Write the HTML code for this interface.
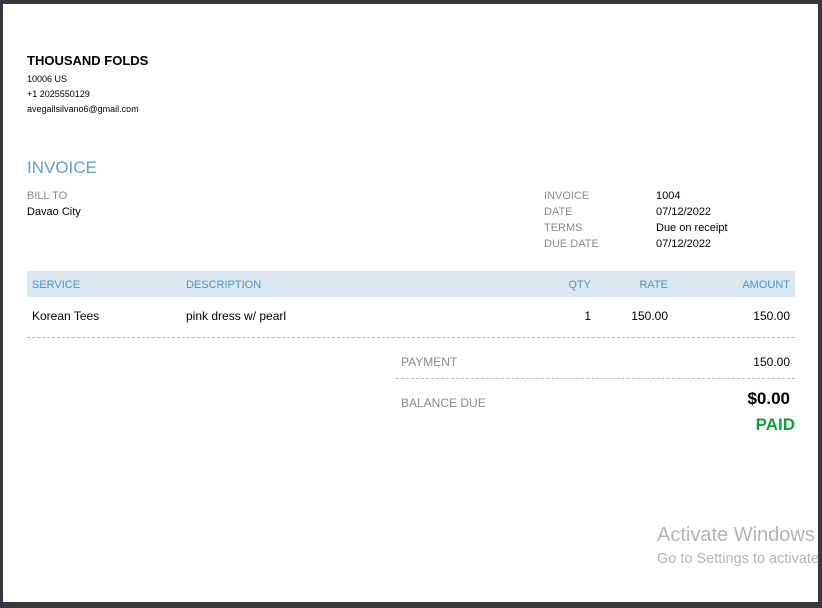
<!DOCTYPE html>
<html><head><style>
body{margin:0;width:822px;height:607px;background:#38373d;position:relative;overflow:hidden;font-family:"Liberation Sans",Arial,sans-serif;}
.page{position:absolute;left:3px;top:4px;width:815px;height:598px;background:#fff;}
.w{position:absolute;left:0;top:1px;width:822px;height:607px;}
.a{position:absolute;white-space:nowrap;}
.g{color:#8a8a8e;font-size:11px;}
.k{color:#000;font-size:11px;}
.b{color:#5391be;font-size:11px;}
</style></head><body>
<div class="page"></div>
<div class="w">
<div class="a" style="left:27px;top:52px;font-size:13px;font-weight:bold;">THOUSAND FOLDS</div>
<div class="a" style="left:27px;top:73px;font-size:9px;">10006 US</div>
<div class="a" style="left:27px;top:88px;font-size:9px;">+1 2025550129</div>
<div class="a" style="left:27px;top:103px;font-size:9px;">avegailsilvano6@gmail.com</div>
<div class="a" style="left:27px;top:157px;font-size:17px;color:#5aa0cf;">INVOICE</div>
<div class="a g" style="left:27px;top:189px;">BILL TO</div>
<div class="a k" style="left:27px;top:205px;">Davao City</div>
<div class="a g" style="left:544px;top:189px;">INVOICE</div>
<div class="a g" style="left:544px;top:205px;">DATE</div>
<div class="a g" style="left:544px;top:221px;">TERMS</div>
<div class="a g" style="left:544px;top:237px;">DUE DATE</div>
<div class="a k" style="left:656px;top:189px;">1004</div>
<div class="a k" style="left:656px;top:205px;">07/12/2022</div>
<div class="a k" style="left:656px;top:221px;">Due on receipt</div>
<div class="a k" style="left:656px;top:237px;">07/12/2022</div>
<div class="a" style="left:27px;top:270px;width:768px;height:26px;background:#dbe8f0;"></div>
<div class="a b" style="left:32px;top:278px;">SERVICE</div>
<div class="a b" style="left:186px;top:278px;">DESCRIPTION</div>
<div class="a b" style="right:231px;top:278px;">QTY</div>
<div class="a b" style="right:154px;top:278px;">RATE</div>
<div class="a b" style="right:32px;top:278px;">AMOUNT</div>
<div class="a" style="left:32px;top:308px;font-size:12px;">Korean Tees</div>
<div class="a" style="left:186px;top:308px;font-size:12px;">pink dress w/ pearl</div>
<div class="a" style="right:231px;top:308px;font-size:12px;">1</div>
<div class="a" style="right:154px;top:308px;font-size:12px;">150.00</div>
<div class="a" style="right:32px;top:308px;font-size:12px;">150.00</div>
<div class="a" style="left:27px;top:336px;width:768px;border-top:1px dashed #bbb;"></div>
<div class="a g" style="left:401px;top:354px;font-size:12px;">PAYMENT</div>
<div class="a" style="right:32px;top:354px;font-size:12px;">150.00</div>
<div class="a" style="left:396px;top:377px;width:399px;border-top:1px dashed #bbb;"></div>
<div class="a g" style="left:401px;top:395px;font-size:12px;">BALANCE DUE</div>
<div class="a" style="right:32px;top:388px;font-size:17px;font-weight:bold;">$0.00</div>
<div class="a" style="right:27px;top:414px;font-size:17px;font-weight:bold;color:#0e9f3a;">PAID</div>
<div class="a" style="left:657px;top:523px;font-size:20px;color:#b5b5b5;">Activate Windows</div>
<div class="a" style="left:657px;top:550px;font-size:14.5px;color:#b5b5b5;">Go to Settings to activate</div>
</div>
</body></html>
